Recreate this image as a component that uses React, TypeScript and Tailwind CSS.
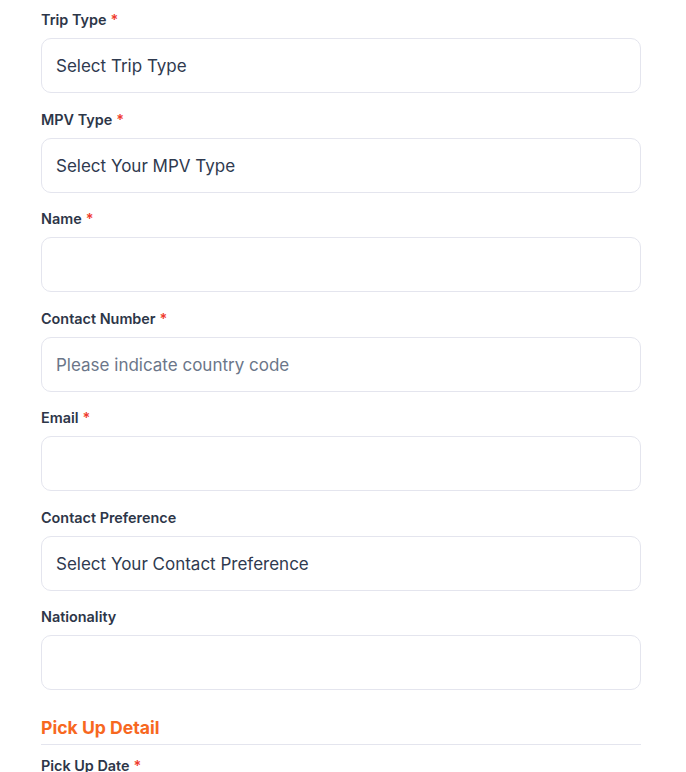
import React from 'react'

interface Field {
  label: string
  required?: boolean
  value?: string
  placeholder?: string
}

const FIELDS: Field[] = [
  { label: 'Trip Type', required: true, value: 'Select Trip Type' },
  { label: 'MPV Type', required: true, value: 'Select Your MPV Type' },
  { label: 'Name', required: true },
  { label: 'Contact Number', required: true, placeholder: 'Please indicate country code' },
  { label: 'Email', required: true },
  { label: 'Contact Preference', value: 'Select Your Contact Preference' },
  { label: 'Nationality' },
]

function Label({ text, required }: { text: string; required?: boolean }) {
  return (
    <label className="block text-[14.4px] leading-5 font-semibold text-[#2d3648]">
      {text}
      {required && <span className="ml-1 text-[#ef3b2d]">*</span>}
    </label>
  )
}

export default function App() {
  return (
    <div className="min-h-screen bg-white" style={{ fontFamily: 'Inter, "Noto Sans", sans-serif' }}>
      <div className="ml-[41px] w-[600px] pt-[10px]">
        {FIELDS.map((f) => (
          <div key={f.label} className="mb-[16.5px]">
            <Label text={f.label} required={f.required} />
            <div className="mt-2 h-[55px] rounded-[10px] border border-[#e4e5ee] px-[14px] pt-[3px] flex items-center text-[17px] text-[#2f3a4f]">
              {f.value && <span>{f.value}</span>}
              {f.placeholder && <span className="text-[#6b7689]">{f.placeholder}</span>}
            </div>
          </div>
        ))}
        <h2 className="mt-[24px] text-[17.6px] leading-7 font-bold text-[#f7681f]">Pick Up Detail</h2>
        <div className="mt-[2px] border-b border-[#e4e5ee]" />
        <div className="mt-[11px]">
          <Label text="Pick Up Date" required />
        </div>
      </div>
    </div>
  )
}
